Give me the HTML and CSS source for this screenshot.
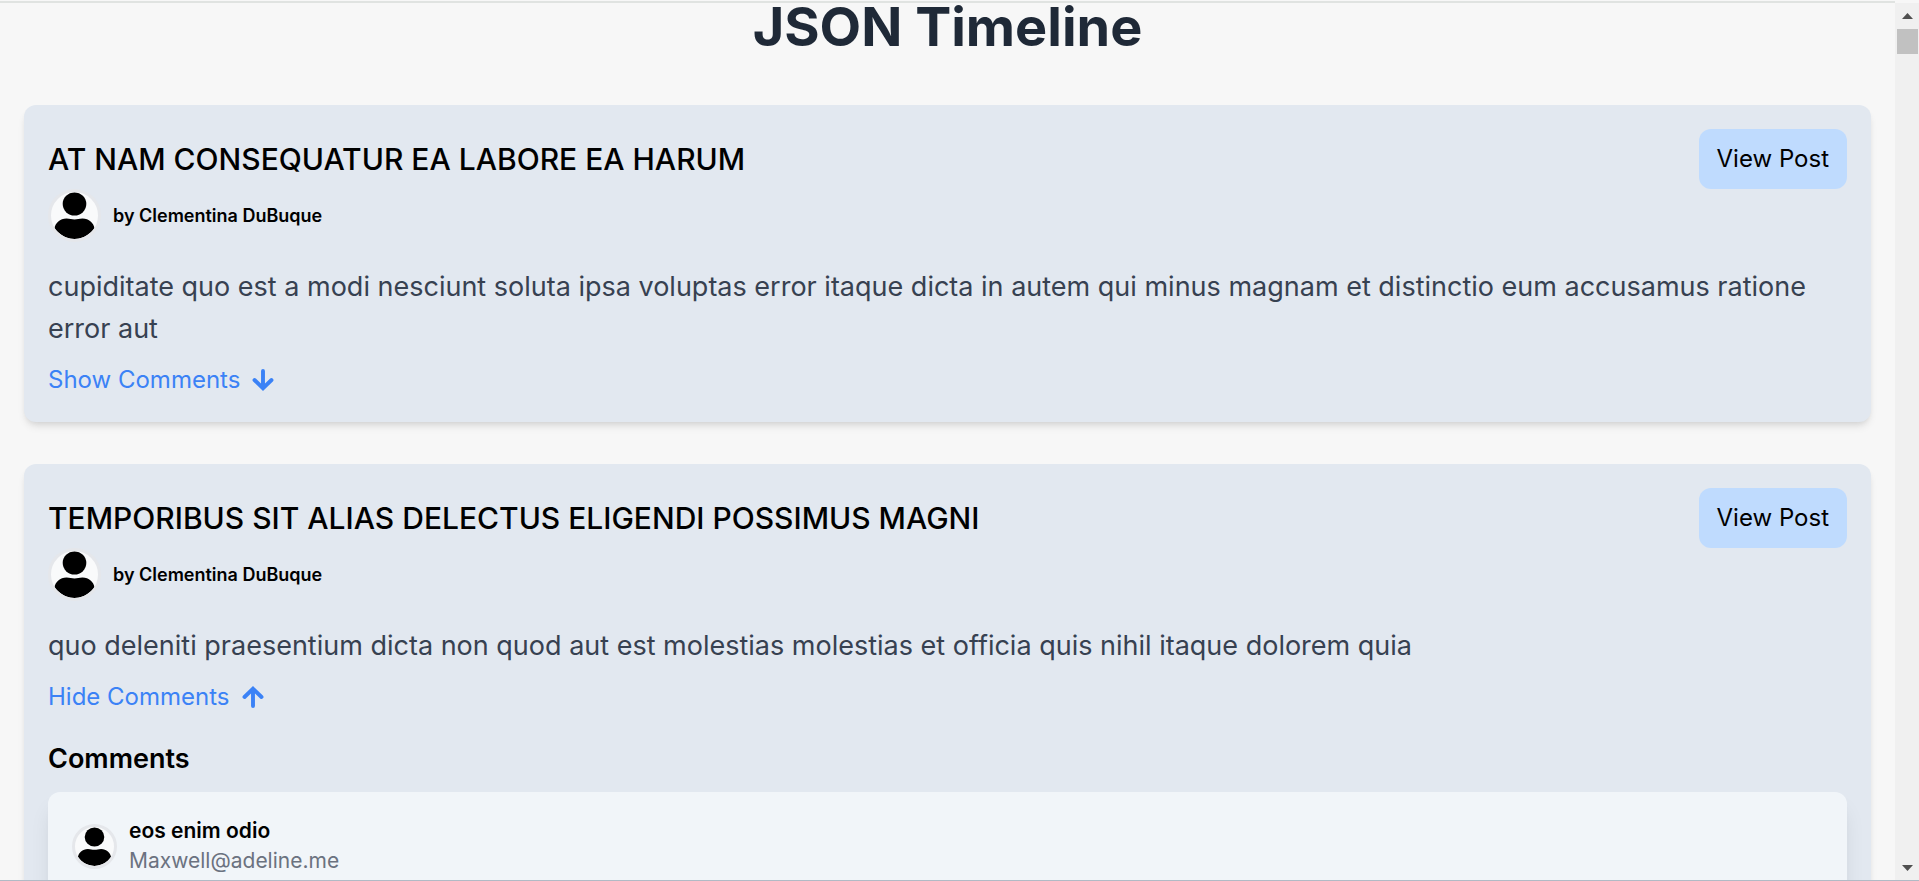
FILE: index.html
```html
<!DOCTYPE html>
<html lang="en">
<head>
<meta charset="utf-8">
<title>JSON Timeline</title>
<link rel="stylesheet" href="styles.css">
</head>
<body>
<svg class="defs" aria-hidden="true">
  <symbol id="person" viewBox="0 0 47 47">
    <ellipse cx="23.5" cy="12" rx="11.8" ry="11.5"/>
    <path d="M3.6 36C4.2 31.500 9 26.500 15.500 26.500C19 26.700 20.500 27.500 23.500 27.500S28 26.700 31.500 26.500C38 26.500 42.800 31.500 43.400 36C41.500 39.500 34 47 23.500 47S5.500 39.500 3.600 36Z"/>
  </symbol>
  <symbol id="arrow-down" viewBox="0 0 22 22">
    <path d="M11 2V18.500M2.500 11L11 19.200L19.500 11" fill="none" stroke="currentColor" stroke-width="3.900" stroke-linecap="round" stroke-linejoin="miter"/>
  </symbol>
</svg>
<div class="window">
  <main class="page">
    <h1 class="page-title">JSON Timeline</h1>
    <div class="posts">
      <article class="post">
        <header class="post-header">
          <h2 class="post-title">at nam consequatur ea labore ea harum</h2>
          <a class="view-post" href="#post-1">View Post</a>
        </header>
        <div class="author">
          <svg class="avatar" aria-hidden="true"><use href="#person"/></svg>
          <span class="author-name">by Clementina DuBuque</span>
        </div>
        <p class="post-body">cupiditate quo est a modi nesciunt soluta ipsa voluptas error itaque dicta in autem qui minus magnam et distinctio eum accusamus ratione error aut</p>
        <button class="toggle" type="button" aria-expanded="false">Show Comments
          <svg class="arrow" aria-hidden="true"><use href="#arrow-down"/></svg>
        </button>
      </article>
      <article class="post">
        <header class="post-header">
          <h2 class="post-title">temporibus sit alias delectus eligendi possimus magni</h2>
          <a class="view-post" href="#post-2">View Post</a>
        </header>
        <div class="author">
          <svg class="avatar" aria-hidden="true"><use href="#person"/></svg>
          <span class="author-name">by Clementina DuBuque</span>
        </div>
        <p class="post-body">quo deleniti praesentium dicta non quod aut est molestias molestias et officia quis nihil itaque dolorem quia</p>
        <button class="toggle" type="button" aria-expanded="true">Hide Comments
          <svg class="arrow arrow-up" aria-hidden="true"><use href="#arrow-down"/></svg>
        </button>
        <section class="comments">
          <h3 class="comments-title">Comments</h3>
          <div class="comment">
            <svg class="avatar avatar-small" aria-hidden="true"><use href="#person"/></svg>
            <div class="comment-author">
              <h4 class="comment-name">eos enim odio</h4>
              <p class="comment-email">Maxwell@adeline.me</p>
            </div>
          </div>
        </section>
      </article>
    </div>
  </main>
  <div class="scrollbar" aria-hidden="true">
    <svg class="scroll-arrow" viewBox="0 0 11 6"><path d="M5.500 0L11 6H0Z"/></svg>
    <div class="thumb"></div>
    <svg class="scroll-arrow scroll-arrow-down" viewBox="0 0 11 6"><path d="M0 0H11L5.500 6Z"/></svg>
  </div>
</div>
</body>
</html>
```
FILE: styles.css
```css
* { box-sizing: border-box; margin: 0; padding: 0; }

body {
  font-family: Inter, "Liberation Sans", sans-serif;
  font-weight: 400;
  color: #000;
  background: #f7f7f7;
}

.defs { display: none; }

.window {
  display: flex;
  height: 100vh;
  overflow: hidden;
  padding-top: 1px;
  border-bottom: 1px solid #b1bac5;
}

.page {
  flex: 1;
  min-width: 0;
  padding: 0 24px;
  border-top: 2px solid #e0e3e1;
}

.page-title {
  margin-bottom: 54px;
  font-size: 54px;
  font-weight: 700;
  line-height: 48px;
  text-align: center;
  color: #1f2937;
}

.posts { display: flex; flex-direction: column; gap: 42px; }

.post {
  padding: 24px;
  border-radius: 12px;
  background: #e2e8f0;
  box-shadow: 0 6px 9px -2px rgba(0, 0, 0, 0.1), 0 3px 6px -3px rgba(0, 0, 0, 0.1);
}

.post-header { display: flex; align-items: center; justify-content: space-between; }

.post-title {
  font-size: 30px;
  font-weight: 500;
  line-height: 42px;
  text-transform: uppercase;
}

.view-post {
  padding: 12px 18px;
  border-radius: 12px;
  font-size: 24px;
  line-height: 36px;
  color: #000;
  text-decoration: none;
  background: #bfdbfe;
}

.author { display: flex; align-items: center; gap: 12px; margin-bottom: 24px; }

.avatar {
  width: 53px;
  height: 53px;
  border: 3px solid #e5e7eb;
  border-radius: 50%;
  background: #f9fafb;
}

.avatar-small { width: 45px; height: 45px; }

.author-name {
  font-size: 18px;
  font-weight: 600;
  line-height: 24px;
}

.post-body {
  margin-bottom: 12px;
  font-size: 27px;
  line-height: 42px;
  color: #374151;
}

.toggle {
  display: flex;
  align-items: center;
  gap: 12px;
  border: 0;
  font: inherit;
  font-size: 24px;
  line-height: 36px;
  color: #3b82f6;
  background: none;
}

.arrow { width: 22px; height: 22px; }
.arrow-up { transform: rotate(180deg); }

.comments { margin-top: 23px; }

.comments-title {
  margin-bottom: 12px;
  font-size: 27px;
  font-weight: 600;
  line-height: 42px;
}

.comment {
  display: flex;
  align-items: center;
  gap: 12px;
  padding: 24px;
  border-radius: 12px;
  background: #f1f5f9;
  box-shadow: 0 15px 22px -4px rgba(0, 0, 0, 0.1), 0 6px 9px -6px rgba(0, 0, 0, 0.1);
}

.comment-name {
  font-size: 21px;
  font-weight: 600;
  line-height: 30px;
}

.comment-email {
  font-size: 21px;
  line-height: 30px;
  color: #6b7280;
}

.scrollbar {
  display: flex;
  flex-direction: column;
  align-items: center;
  width: 24px;
  margin-top: 2px;
  padding: 10px 0 9px;
  background: #f0f0f0;
}

.scroll-arrow { width: 11px; height: 6px; fill: #505050; }
.scroll-arrow-down { margin-top: auto; }
.thumb { width: 21px; height: 25px; margin-top: 10px; background: #c1c1c1; }
```
